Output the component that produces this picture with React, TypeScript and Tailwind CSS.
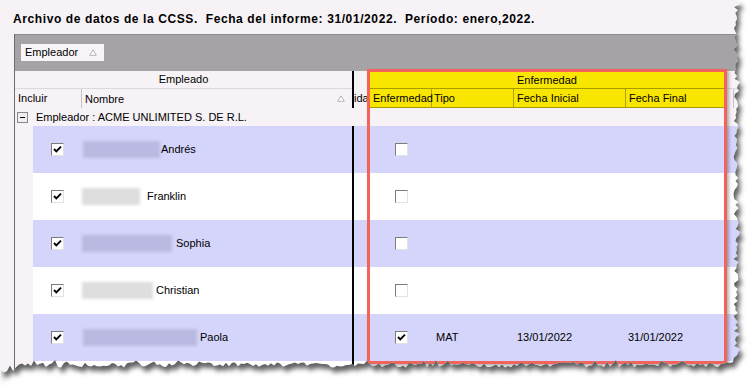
import React from "react";

// ────────────────────────────────────────────
// Data
// ────────────────────────────────────────────

type Row = {
  name: string;
  blurStart: number;
  blurW: number;
  gap: number;
  shaded: boolean;
  sick: boolean;
  tipo?: string;
  inicio?: string;
  fin?: string;
};

const rows: Row[] = [
  { name: "Andrés", blurStart: 1, blurW: 77, gap: 1, shaded: true, sick: false },
  { name: "Franklin", blurStart: 0, blurW: 58, gap: 7, shaded: false, sick: false },
  { name: "Sophia", blurStart: 0, blurW: 90, gap: 4, shaded: true, sick: false },
  { name: "Christian", blurStart: 0, blurW: 71, gap: 3, shaded: false, sick: false },
  {
    name: "Paola",
    blurStart: 1,
    blurW: 114,
    gap: 3,
    shaded: true,
    sick: true,
    tipo: "MAT",
    inicio: "13/01/2022",
    fin: "31/01/2022",
  },
];

// ────────────────────────────────────────────
// Torn paper edge
// ────────────────────────────────────────────

function makeTornPath() {
  let s = 17;
  const rnd = () => {
    s = (s * 9301 + 49297) % 233280;
    return s / 233280;
  };
  const pts: string[] = ["M0 0", "L737 0"];
  for (let y = 4; y <= 360; y += 3) {
    const x = 736 + (rnd() - 0.5) * 5 + (rnd() > 0.85 ? 3 : 0);
    pts.push(`L${x.toFixed(1)} ${y}`);
  }
  pts.push("L733 362");
  for (let x = 730; x >= 0; x -= 3) {
    const base = 365 + (x < 20 ? (20 - x) * 0.5 : 0);
    const y = base + (rnd() - 0.5) * 5 - (rnd() > 0.85 ? 3 : 0);
    pts.push(`L${x} ${y.toFixed(1)}`);
  }
  pts.push("L0 380 Z");
  return pts.join(" ");
}

const torn = makeTornPath();

function TornEdge() {
  const outside = `M0 0H754V390H0Z ${torn}`;
  return (
    <svg
      className="pointer-events-none absolute inset-0"
      width={754}
      height={390}
      viewBox="0 0 754 390"
    >
      <defs>
        <clipPath id="outside">
          <path d={outside} clipRule="evenodd" />
        </clipPath>
        <filter id="soft" x="-5%" y="-5%" width="110%" height="110%">
          <feGaussianBlur stdDeviation="2.8" />
        </filter>
      </defs>
      <path d={outside} fill="#ffffff" fillRule="evenodd" />
      <g clipPath="url(#outside)">
        <path d={torn} transform="translate(3 5)" fill="#5e5e5e" filter="url(#soft)" />
      </g>
    </svg>
  );
}

// ────────────────────────────────────────────
// Small controls
// ────────────────────────────────────────────

function Check({ checked }: { checked: boolean }) {
  return (
    <span className="flex h-[13px] w-[13px] items-center justify-center border border-t-[#7c7c7c] border-l-[#7c7c7c] border-r-[#e2e2e2] border-b-[#e2e2e2] bg-white">
      {checked && (
        <svg width="9" height="9" viewBox="0 0 9 9">
          <path d="M1 4 L3.3 6.4 L8 1.6" fill="none" stroke="#000" strokeWidth="1.9" />
        </svg>
      )}
    </span>
  );
}

function SortArrow() {
  return (
    <svg width="8" height="7" viewBox="0 0 8 7">
      <path d="M4 0.8 L7.3 6.3 L0.7 6.3 Z" fill="#ffffff" stroke="#b4b2b4" strokeWidth="1" />
    </svg>
  );
}

// ────────────────────────────────────────────
// Page
// ────────────────────────────────────────────

export default function App() {
  return (
    <div className="relative h-[390px] w-[754px] overflow-hidden bg-white font-['Liberation_Sans',Arial,sans-serif] text-[11px] text-black">
      <div className="flex h-full w-full flex-col bg-[#f6f2f6]">
        {/* Title */}
        <div className="h-[34px] whitespace-pre pl-[13px] pt-[12px] text-[12px] font-bold leading-[14px] tracking-[0.6px]">
          Archivo de datos de la CCSS.  Fecha del informe: 31/01/2022.  Período: enero,2022.
        </div>

        {/* Grid */}
        <div className="ml-[14px] flex flex-1 flex-col border-l border-[#6e6c6e]">
          {/* Group-by band */}
          <div className="h-[37px] border-t border-[#8e8c8e] bg-[#a5a3a5] pl-[6px] pt-[9px]">
            <div className="flex h-[17px] w-[83px] items-center justify-between bg-[#f7f5f7] pl-[4px] pr-[7px] leading-none">
              <span>Empleador</span>
              <SortArrow />
            </div>
          </div>

          {/* Header band row */}
          <div className="flex h-[18px] leading-[17px]">
            <div className="w-[337px] border-b border-[#dcd8dc] text-center">Empleado</div>
            <div className="w-[2px] bg-black" />
            <div className="w-[16px]" />
            <div className="w-[354px] border-t border-b border-[#a89c00] bg-[#f8e600] text-center leading-[16px]">
              Enfermedad
            </div>
            <div className="flex-1 border-b border-[#dcd8dc]" />
          </div>

          {/* Column header row */}
          <div className="flex h-[19px] leading-[18px]">
            <div className="w-[67px] border-r border-[#c4c0c4] pl-[3px]">Incluir</div>
            <div className="flex w-[270px] items-center justify-between pl-[3px] pr-[7px]">
              <span>Nombre</span>
              <SortArrow />
            </div>
            <div className="w-[2px] bg-black" />
            <div className="w-[16px] overflow-hidden whitespace-nowrap">ida</div>
            <div className="flex w-[354px] border-b border-[#a89c00] bg-[#f8e600]">
              <div className="w-[62px] border-r border-[#b0a400] pl-[3px]">Enfermedad</div>
              <div className="w-[82px] border-r border-[#b0a400] pl-[2px]">Tipo</div>
              <div className="w-[112px] border-r border-[#b0a400] pl-[3px]">Fecha Inicial</div>
              <div className="flex-1 pl-[3px]">Fecha Final</div>
            </div>
            <div className="w-[10px] border-r border-[#c4c0c4]" />
          </div>

          {/* Group row */}
          <div className="flex h-[18px] items-center">
            <span className="ml-[2px] flex h-[11px] w-[11px] items-center justify-center border border-[#8a888a] bg-[#f0eef0]">
              <span className="h-px w-[5px] bg-black" />
            </span>
            <span className="ml-[8px]">Empleador : ACME UNLIMITED S. DE R.L.</span>
          </div>

          {/* Data rows */}
          {rows.map((r) => (
            <div key={r.name} className="flex h-[47px] shrink-0">
              <div className="w-[18px]" />
              <div className={`flex flex-1 items-center ${r.shaded ? "bg-[#d5d5fb]" : "bg-white"}`}>
                <div className="w-[49px] pl-[18px]">
                  <Check checked />
                </div>
                <div className="flex h-full w-[270px] items-center">
                  <div
                    className={`h-[17px] blur-[1.5px] ${r.shaded ? "bg-[#b9b9e2]" : "bg-[#dedede]"}`}
                    style={{ marginLeft: r.blurStart, width: r.blurW }}
                  />
                  <span style={{ marginLeft: r.gap }}>{r.name}</span>
                </div>
                <div className="h-full w-[2px] bg-black" />
                <div className="w-[16px]" />
                <div className="w-[62px] pl-[25px]">
                  <Check checked={r.sick} />
                </div>
                <div className="w-[82px] pl-[4px]">{r.tipo}</div>
                <div className="w-[112px] pl-[3px]">{r.inicio}</div>
                <div className="pl-[2px]">{r.fin}</div>
              </div>
            </div>
          ))}

          {/* Next row (cut by the torn edge) */}
          <div className="flex flex-1">
            <div className="w-[18px]" />
            <div className="flex flex-1 bg-white">
              <div className="w-[319px]" />
              <div className="w-[2px] bg-black" />
            </div>
          </div>
        </div>
      </div>

      {/* Highlight frame */}
      <div className="absolute left-[367px] top-[69px] h-[295px] w-[360px] border-[3px] border-[#f2635a] shadow-[2px_2px_3px_rgba(0,0,0,0.3)]" />

      <TornEdge />
    </div>
  );
}
